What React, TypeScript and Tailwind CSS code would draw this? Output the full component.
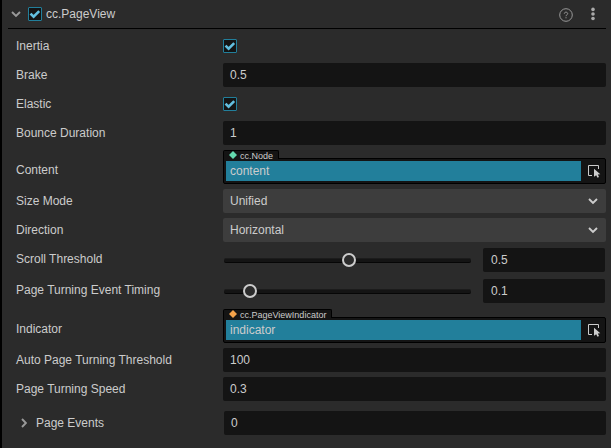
import type { ReactNode } from 'react';

function Check() {
  return (
    <span className="flex h-[14px] w-[14px] shrink-0 items-center justify-center rounded-[1px] border border-[#227f9b] bg-[#141414]">
      <svg width="12" height="12" viewBox="0 0 12 12" fill="none" stroke="#63bfdf" strokeWidth="2.6">
        <path d="M1.5 5.6 4.6 8.6 10.2 3.1" />
      </svg>
    </span>
  );
}

function Chevron({ color, className = '' }: { color: string; className?: string }) {
  return (
    <svg className={className} width="10" height="8" viewBox="0 0 10 8" fill="none" stroke={color} strokeWidth="1.9">
      <path d="M1 2 5 5.9 9 2" />
    </svg>
  );
}

function Row({ label, className = '', labelClass = 'leading-6', children }: { label: string; className?: string; labelClass?: string; children: ReactNode }) {
  return (
    <div className={`flex h-6 items-center ${className}`}>
      <div className={`h-6 w-[207px] shrink-0 ${labelClass}`}>{label}</div>
      {children}
    </div>
  );
}

function Field({ value }: { value: string }) {
  return <div className="h-6 flex-1 rounded-[2px] bg-[#141414] pl-[7px] leading-6">{value}</div>;
}

function Select({ value }: { value: string }) {
  return (
    <div className="flex h-6 flex-1 items-center justify-between rounded-[2px] bg-[#3d3d3d] pr-2 pl-[7px]">
      <span>{value}</span>
      <Chevron color="#cccccc" />
    </div>
  );
}

function Slider({ position, value }: { position: number; value: string }) {
  return (
    <>
      <div className="relative ml-px h-[5px] w-[247px] rounded-[2px] border-t border-b border-t-[#1c1c1c] border-b-[#060606] bg-[#141414]">
        <span
          className="absolute top-[-6px] h-[14px] w-[14px] rounded-full border-2 border-[#cccccc] bg-[#2b2b2b]"
          style={{ left: position }}
        />
      </div>
      <div className="mr-px ml-3 h-6 flex-1 rounded-[2px] bg-[#141414] pl-2 leading-6">{value}</div>
    </>
  );
}

function NodeRow({ label, type, value, color, tab, className }: { label: string; type: string; value: string; color: string; tab: string; className: string }) {
  return (
    <div className={`flex h-[34px] ${className}`}>
      <div className="w-[207px] shrink-0 pt-2 leading-6">{label}</div>
      <div className="flex flex-1 flex-col">
        <div className={`relative z-10 -mb-px flex h-[9px] items-start rounded-t-[2px] border border-b-0 border-black bg-[#141414] pl-[5px] ${tab}`}>
          <svg className="shrink-0" width="8" height="8" viewBox="0 0 8 8" fill={color}>
            <path d="M4 0 8 4 4 8 0 4Z" />
          </svg>
          <span className="ml-[3px] text-[9px] leading-[10px] whitespace-nowrap">{type}</span>
        </div>
        <div className="flex h-[26px] rounded-b-[2px] rounded-tr-[2px] border border-black bg-[#141414] p-[2px]">
          <div className="h-5 w-[355px] bg-[#227f9b] pl-1 leading-5">{value}</div>
          <svg className="mt-[3px] ml-[7px]" width="13" height="14" viewBox="0 0 13 14">
            <path d="M4 11.5H.5V1.5H10.5V5" fill="none" stroke="#cccccc" />
            <path d="M6 4.7 12.3 10.3 9.8 10.6 11 13 9.5 13.7 8.2 11.3 6 12.8Z" fill="#cccccc" />
          </svg>
        </div>
      </div>
    </div>
  );
}

export default function App() {
  return (
    <div className="h-[448px] w-[611px] overflow-hidden border-l-2 border-black bg-[#2b2b2b] font-['Liberation_Sans',Arial,sans-serif] text-[12px] text-[#cccccc]">
      <header className="mr-[5px] ml-[6px] flex h-[29px] items-center border-b border-black pl-[3px]">
        <Chevron color="#999999" />
        <span className="ml-[7px]">
          <Check />
        </span>
        <span className="ml-1 flex-1">cc.PageView</span>
        <svg className="mt-px mr-[18px]" width="14" height="14" viewBox="0 0 14 14" fill="none" stroke="#999999">
          <circle cx="7" cy="7" r="6.3" />
          <path d="M5.3 5.7C5.3 3.6 8.7 3.7 8.7 5.7 8.7 6.8 7 6.8 7 8.2M7 9.2V10.3" />
        </svg>
        <svg className="mr-[11px]" width="4" height="14" viewBox="0 0 4 14" fill="#aaaaaa">
          <circle cx="2" cy="2.4" r="1.8" />
          <circle cx="2" cy="7" r="1.8" />
          <circle cx="2" cy="11.5" r="1.8" />
        </svg>
      </header>
      <main className="flex flex-col pt-[5px] pr-[5px] pl-[14px]">
        <Row label="Inertia"><Check /></Row>
        <Row label="Brake" className="mt-[5px]"><Field value="0.5" /></Row>
        <Row label="Elastic" className="mt-[5px]"><Check /></Row>
        <Row label="Bounce Duration" className="mt-[5px]"><Field value="1" /></Row>
        <NodeRow className="mt-[5px]" label="Content" type="cc.Node" value="content" color="#63d9ae" tab="w-14" />
        <Row label="Size Mode" className="mt-[5px]"><Select value="Unified" /></Row>
        <Row label="Direction" className="mt-[5px]"><Select value="Horizontal" /></Row>
        <Row label="Scroll Threshold" labelClass="leading-[22px]" className="mt-[6px]"><Slider position={118} value="0.5" /></Row>
        <Row label="Page Turning Event Timing" labelClass="leading-[22px]" className="mt-[7px]"><Slider position={19} value="0.1" /></Row>
        <NodeRow className="mt-[6px]" label="Indicator" type="cc.PageViewIndicator" value="indicator" color="#f3a24a" tab="w-[109px]" />
        <Row label="Auto Page Turning Threshold" className="mt-[5px]"><Field value="100" /></Row>
        <Row label="Page Turning Speed" className="mt-[5px]"><Field value="0.3" /></Row>
        <div className="mt-[10px] flex h-6 items-center">
          <Chevron color="#999999" className="ml-[3px] -rotate-90" />
          <span className="ml-[7px] w-[188px] leading-6">Page Events</span>
          <Field value="0" />
        </div>
      </main>
    </div>
  );
}
